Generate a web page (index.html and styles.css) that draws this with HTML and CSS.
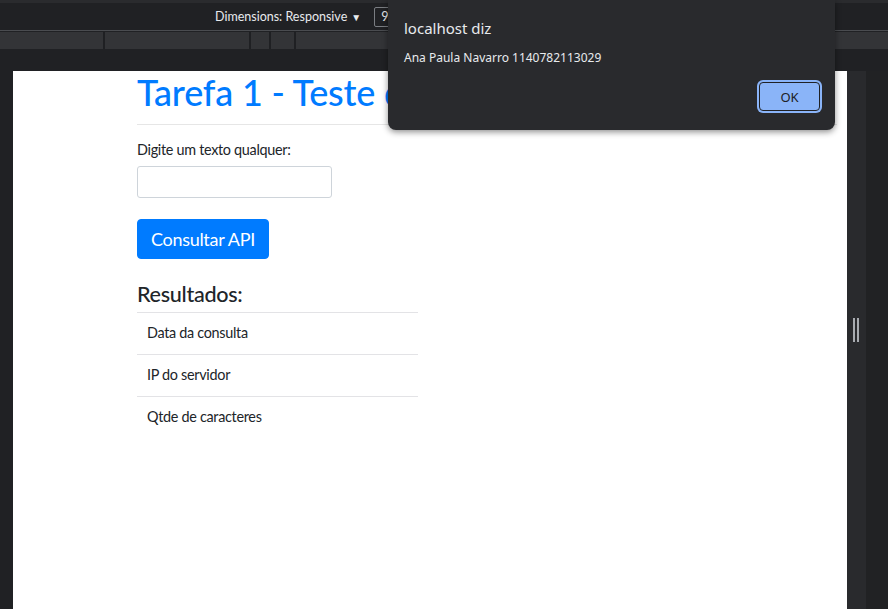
FILE: index.html
```html
<!DOCTYPE html>
<html lang="pt-BR">
<head>
<meta charset="utf-8">
<title>Tarefa 1</title>
<link rel="stylesheet" href="styles.css">
</head>
<body>
<div class="devtools-top">
  <div class="toolbar">
    <span class="dims">Dimensions: Responsive <span class="caret">▼</span></span>
    <span class="dim-input">98</span>
  </div>
  <div class="ruler">
    <span class="seg s1"></span>
    <span class="seg s2"></span>
    <span class="seg s3"></span>
    <span class="seg s4"></span>
    <span class="seg s5"></span>
  </div>
</div>
<div class="stage">
  <div class="gutter-left"></div>
  <main class="page">
    <div class="container">
      <h1 class="title">Tarefa 1 - Teste de API</h1>
      <hr class="rule">
      <label class="label" for="texto">Digite um texto qualquer:</label>
      <input class="field" id="texto" type="text">
      <button class="btn" type="button">Consultar API</button>
      <h4 class="results-title">Resultados:</h4>
      <ul class="list">
        <li class="item">Data da consulta</li>
        <li class="item">IP do servidor</li>
        <li class="item">Qtde de caracteres</li>
      </ul>
    </div>
  </main>
  <div class="handle"><span class="grip"></span></div>
  <div class="gutter-right"></div>
</div>
<div class="dialog">
  <div class="dialog-title">localhost diz</div>
  <div class="dialog-msg">Ana Paula Navarro 1140782113029</div>
  <div class="dialog-actions"><button class="ok" type="button">OK</button></div>
</div>
</body>
</html>
```
FILE: styles.css
```css
* { box-sizing: border-box; }
html, body { margin: 0; padding: 0; }
body {
  width: 888px;
  height: 609px;
  overflow: hidden;
  background: #202124;
  display: flex;
  flex-direction: column;
  font-family: "Noto Sans", "Open Sans", sans-serif;
  position: relative;
}
.devtools-top { flex: none; }
.toolbar {
  height: 31px;
  border-top: 3px solid #2a2b2e;
  border-bottom: 1px solid #4a4c50;
  background: #202124;
  display: flex;
  align-items: center;
  padding-left: 215px;
}
.dims {
  color: #e8eaed;
  font-size: 12.5px;
  font-family: "Lato", sans-serif;
  display: flex;
  align-items: center;
}
.caret { font-size: 10px; margin-left: 4px; }
.dim-input {
  margin-left: 13px;
  height: 20px;
  width: 40px;
  border: 1px solid #7a7d82;
  border-radius: 2px;
  color: #e8eaed;
  font-size: 12.5px;
  font-family: "Lato", sans-serif;
  line-height: 18px;
  padding-left: 6px;
}
.ruler {
  height: 17px;
  margin-top: 1px;
  background: #333437;
  display: flex;
}
.seg { height: 100%; border-right: 2px solid #1f2023; }
.s1 { width: 105px; }
.s2 { width: 146px; }
.s3 { width: 20px; }
.s4 { width: 25px; }
.s5 { flex: 1; border-right: none; }

.stage {
  flex: 1;
  display: flex;
  margin-top: 22px;
  min-height: 0;
}
.gutter-left { width: 13px; flex: none; }
.page {
  flex: 1;
  background: #ffffff;
  color: #212529;
}
.handle {
  width: 19px;
  flex: none;
  background: #292a2d;
  display: flex;
  justify-content: center;
  padding-top: 247px;
}
.grip {
  width: 6px;
  height: 24px;
  border-left: 2px solid #a8abb0;
  border-right: 2px solid #a8abb0;
  margin-left: -2px;
}
.gutter-right { width: 22px; flex: none; background: #212224; }

.container {
  padding-left: 124px;
  width: 405px;
  font-family: "Lato", sans-serif;
  font-size: 14.4px;
  line-height: 1.5;
  letter-spacing: -0.3px;
}
.title {
  margin: 0;
  font-size: 36px;
  font-weight: 500;
  line-height: 43px;
  color: #007bff;
  white-space: nowrap;
  letter-spacing: -0.2px;
}
.rule {
  margin: 10px 0 14px;
  border: 0;
  border-top: 1px solid #e6e6e6;
  width: 700px;
}
.label { display: block; margin-bottom: 5px; }
.field {
  display: block;
  width: 195px;
  height: 32px;
  border: 1px solid #ced4da;
  border-radius: 3px;
  background: #fff;
}
.btn {
  display: block;
  margin-top: 21px;
  height: 40px;
  padding: 0 13px;
  background: #007bff;
  border: 1px solid #007bff;
  border-radius: 4px;
  color: #fff;
  font-family: "Lato", sans-serif;
  font-size: 18px;
  letter-spacing: -0.3px;
}
.results-title {
  margin: 22px 0 5px;
  font-size: 21.6px;
  font-weight: 500;
  line-height: 26px;
}
.list { list-style: none; margin: 0; padding: 0; width: 281px; }
.item {
  height: 42px;
  border-top: 1px solid #e3e3e6;
  padding: 0 10px;
  display: flex;
  align-items: center;
}

.dialog {
  position: absolute;
  left: 388px;
  top: 0;
  width: 447px;
  height: 130px;
  background: #292a2d;
  border-radius: 0 0 8px 8px;
  box-shadow: 0 2px 6px rgba(0,0,0,0.45);
  color: #e8eaed;
  padding: 17px 15px 0 16px;
}
.dialog-title { font-size: 15px; line-height: 22px; }
.dialog-msg { font-size: 12px; margin-top: 10px; line-height: 18px; }
.dialog-actions { display: flex; justify-content: flex-end; margin-top: 15px; }
.ok {
  width: 61px;
  height: 29px;
  background: #8ab4f8;
  border: 1px solid #202124;
  border-radius: 4px;
  box-shadow: 0 0 0 2px #8ab4f8;
  color: #202124;
  font-family: "Noto Sans", sans-serif;
  font-size: 13px;
}
```
